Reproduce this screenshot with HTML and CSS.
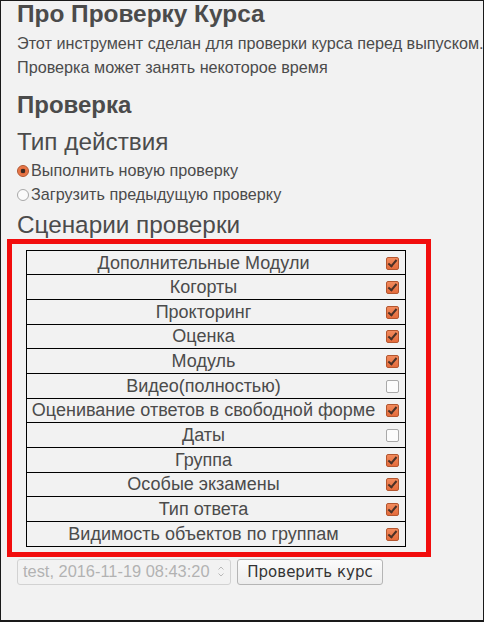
FILE: index.html
```html
<!DOCTYPE html>
<html lang="ru">
<head>
<meta charset="utf-8">
<title>Проверка курса</title>
<link rel="stylesheet" href="styles.css">
</head>
<body>
<div class="frame">
  <h1 class="title">Про Проверку Курса</h1>
  <p class="intro">Этот инструмент сделан для проверки курса перед выпуском.<br>Проверка может занять некоторое время</p>
  <h2 class="section">Проверка</h2>
  <h3 class="sub sub-first">Тип действия</h3>
  <div class="radios">
    <label class="radio-line"><span class="radio on"></span>Выполнить новую проверку</label>
    <label class="radio-line"><span class="radio"></span>Загрузить предыдущую проверку</label>
  </div>
  <h3 class="sub sub-second">Сценарии проверки</h3>
  <div class="highlight">
    <div class="list">
      <div class="row"><span class="name">Дополнительные Модули</span><span class="cell"><span class="cb on"></span></span></div>
      <div class="row"><span class="name">Когорты</span><span class="cell"><span class="cb on"></span></span></div>
      <div class="row"><span class="name">Прокторинг</span><span class="cell"><span class="cb on"></span></span></div>
      <div class="row"><span class="name">Оценка</span><span class="cell"><span class="cb on"></span></span></div>
      <div class="row"><span class="name">Модуль</span><span class="cell"><span class="cb on"></span></span></div>
      <div class="row"><span class="name">Видео(полностью)</span><span class="cell"><span class="cb"></span></span></div>
      <div class="row"><span class="name">Оценивание ответов в свободной форме</span><span class="cell"><span class="cb on"></span></span></div>
      <div class="row"><span class="name">Даты</span><span class="cell"><span class="cb"></span></span></div>
      <div class="row"><span class="name">Группа</span><span class="cell"><span class="cb on"></span></span></div>
      <div class="row"><span class="name">Особые экзамены</span><span class="cell"><span class="cb on"></span></span></div>
      <div class="row"><span class="name">Тип ответа</span><span class="cell"><span class="cb on"></span></span></div>
      <div class="row"><span class="name">Видимость объектов по группам</span><span class="cell"><span class="cb on"></span></span></div>
    </div>
  </div>
  <div class="controls">
    <div class="select"><span class="select-text">test, 2016-11-19 08:43:20</span><span class="spin"><svg width="6" height="11" viewBox="0 0 6 11"><path d="M0.5 3.5 L3 1 L5.5 3.5" fill="none" stroke="#b8b8b8" stroke-width="1"/><path d="M0.5 7.5 L3 10 L5.5 7.5" fill="none" stroke="#b8b8b8" stroke-width="1"/></svg></span></div>
    <button class="btn" type="button">Проверить курс</button>
  </div>
</div>
</body>
</html>
```
FILE: styles.css
```css
html, body {
  margin: 0;
  padding: 0;
  background: #f2f2f2;
}
body {
  font-family: "Liberation Sans", Arial, sans-serif;
  color: #4b4b4b;
}
.frame {
  box-sizing: border-box;
  width: 484px;
  height: 622px;
  border-top: 1px solid #1a1a1a;
  border-left: 1px solid #1a1a1a;
  border-right: 1px solid #1a1a1a;
  border-bottom: 2px solid #1a1a1a;
  padding: 0 0 0 16px;
  overflow: hidden;
}
.title {
  margin: 0;
  font-size: 24.4px;
  line-height: 26px;
  font-weight: bold;
}
.intro {
  margin: 3.5px 0 0;
  font-size: 16.2px;
  line-height: 24px;
  white-space: nowrap;
}
.section {
  margin: 13.2px 0 0;
  font-size: 24px;
  line-height: 26px;
  font-weight: bold;
}
.sub {
  font-size: 24.3px;
  line-height: 28px;
  font-weight: normal;
}
.sub-first { margin: 10px 0 0; }
.sub-second { margin: 4.2px 0 0; }
.radios {
  margin-top: 2.8px;
  display: flex;
  flex-direction: column;
}
.radio-line {
  font-size: 16.2px;
  line-height: 24px;
  display: flex;
  align-items: center;
}
.radio {
  box-sizing: border-box;
  width: 12px;
  height: 12px;
  border-radius: 50%;
  border: 1px solid #a8a8a8;
  background: #fbfbfb;
  margin-right: 2px;
  position: relative;
  top: 1px;
}
.radio.on {
  border-color: #b0532c;
  background: radial-gradient(circle, #3b2a22 0 2px, #e66d3d 2.6px, #f08a5e 100%);
}
.highlight {
  margin: 0 0 0 -10px;
  width: 424px;
  box-sizing: border-box;
  border: 5px solid #f20d0d;
  padding: 6px 20px 5px 14px;
}
.list {
  border-top: 1px solid #000;
  border-left: 1px solid #000;
  border-right: 1px solid #000;
}
.row {
  box-sizing: border-box;
  display: flex;
  height: 24.67px;
  padding-top: 1px;
  border-bottom: 1px solid #000;
  align-items: center;
  font-size: 18px;
}
.name {
  flex: 1;
  text-align: center;
  white-space: nowrap;
}
.cell {
  width: 25px;
  display: flex;
  justify-content: center;
}
.cb {
  box-sizing: border-box;
  width: 13px;
  height: 13px;
  border: 1px solid #a9a9a9;
  border-radius: 2px;
  background: #fcfcfc;
  position: relative;
}
.cb.on {
  border-color: #b4562f;
  background: linear-gradient(#f28a5c, #e46c3c);
}
.cb.on::after {
  content: "";
  position: absolute;
  left: 3px;
  top: 0px;
  width: 3px;
  height: 7px;
  border-right: 2px solid #4a3127;
  border-bottom: 2px solid #4a3127;
  transform: rotate(40deg);
}
.controls {
  display: flex;
  gap: 6px;
  margin-top: 2px;
  align-items: center;
}
.select {
  box-sizing: border-box;
  width: 214px;
  height: 26px;
  border: 1px solid #d2d2d2;
  border-radius: 3px;
  display: flex;
  align-items: center;
  justify-content: space-between;
  padding: 0 6px 0 5px;
  color: #b2b2b2;
  font-family: "Liberation Sans", Arial, sans-serif;
  font-size: 16.4px;
  white-space: nowrap;
}
.spin { display: flex; flex-shrink: 0; }
.btn {
  box-sizing: border-box;
  height: 26px;
  width: 146px;
  border: 1px solid #b5b5b5;
  border-radius: 3px;
  background: linear-gradient(#fbfbfb, #ededed);
  font-family: "DejaVu Sans", "Liberation Sans", sans-serif;
  font-size: 15px;
  color: #333;
  padding: 0 4px;
}
```
